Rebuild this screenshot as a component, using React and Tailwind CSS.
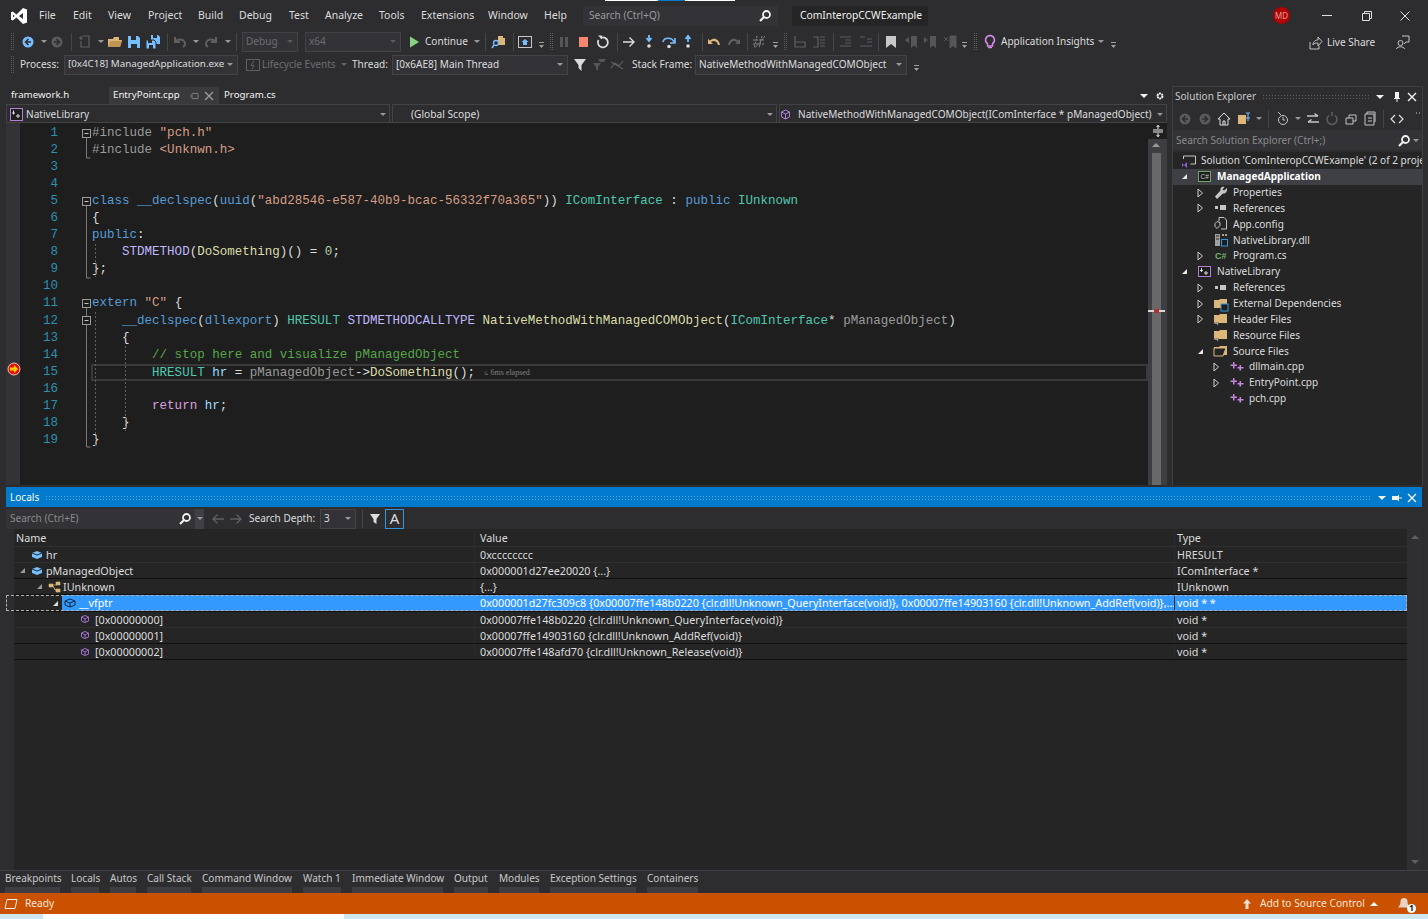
import React from "react";

const kw = "text-[#569cd6]";
const str = "text-[#d69d85]";
const typ = "text-[#4ec9b0]";
const mac = "text-[#beb7ff]";
const fn = "text-[#dcdcaa]";
const par = "text-[#9a9a9a]";
const loc = "text-[#9cdcfe]";
const num = "text-[#b5cea8]";
const com = "text-[#57a64a]";
const ctl = "text-[#d8a0df]";
const pre = "text-[#9b9b9b]";
const pl = "text-[#dcdcdc]";

const code = [
  [[pre, "#include "], [str, '"pch.h"']],
  [[pre, "#include "], [str, "<Unknwn.h>"]],
  [],
  [],
  [[kw, "class __declspec"], [pl, "("], [kw, "uuid"], [pl, "("], [str, '"abd28546-e587-40b9-bcac-56332f70a365"'], [pl, ")) "], [typ, "IComInterface"], [pl, " : "], [kw, "public "], [typ, "IUnknown"]],
  [[pl, "{"]],
  [[kw, "public"], [pl, ":"]],
  [[mac, "    STDMETHOD"], [pl, "("], [fn, "DoSomething"], [pl, ")() = "], [num, "0"], [pl, ";"]],
  [[pl, "};"]],
  [],
  [[kw, "extern "], [str, '"C"'], [pl, " {"]],
  [[kw, "    __declspec"], [pl, "("], [kw, "dllexport"], [pl, ") "], [typ, "HRESULT "], [mac, "STDMETHODCALLTYPE "], [fn, "NativeMethodWithManagedCOMObject"], [pl, "("], [typ, "IComInterface"], [pl, "* "], [par, "pManagedObject"], [pl, ")"]],
  [[pl, "    {"]],
  [[com, "        // stop here and visualize pManagedObject"]],
  [[typ, "        HRESULT "], [loc, "hr"], [pl, " = "], [par, "pManagedObject"], [pl, "->"], [fn, "DoSomething"], [pl, "();"]],
  [],
  [[ctl, "        return "], [loc, "hr"], [pl, ";"]],
  [[pl, "    }"]],
  [[pl, "}"]],
];

function Ic({ children, className = "", w = 16, h = 16 }) {
  return (
    <svg width={w} height={h} viewBox={`0 0 ${w} ${h}`} className={`shrink-0 ${className}`}>
      {children}
    </svg>
  );
}

function Caret({ className = "" }) {
  return <span className={`shrink-0 w-0 h-0 border-x-[3px] border-t-[3px] border-x-transparent border-t-[#999999] ${className}`} />;
}

function Sep({ className = "" }) {
  return <span className={`shrink-0 w-px h-[18px] bg-[#46464a] ${className}`} />;
}

function Grip({ className = "" }) {
  return <span className={`shrink-0 w-[3px] h-[17px] border-x border-dotted border-[#5a5a5d] ${className}`} />;
}

function Over({ className = "" }) {
  return (
    <Ic w={5} h={8} className={`mt-[6px] ${className}`}>
      <path d="M0 1h5v1H0zM0 4h5L2.5 7z" fill="#a0a0a0" />
    </Ic>
  );
}

function Combo({ text, className = "", dim }) {
  return (
    <div className={`shrink-0 flex items-center justify-between h-[20px] pl-[3px] pr-[4px] border border-[#434346] bg-[#333337] ${dim ? "text-[#6d6d70]" : "text-[#dcdcdc]"} ${className}`}>
      <span className="whitespace-nowrap">{text}</span>
      <Caret className={dim ? "opacity-40" : ""} />
    </div>
  );
}

const Back = ({ on }) => (
  <Ic>
    <circle cx="8" cy="8" r="5.5" fill={on ? "#75beff" : "#5a5a5d"} />
    <path d="M8.5 5L5.5 8l3 3M6 8h5" stroke="#2d2d30" strokeWidth="1.5" fill="none" />
  </Ic>
);

const Fwd = () => (
  <Ic>
    <circle cx="8" cy="8" r="5.5" fill="#5a5a5d" />
    <path d="M7.5 5l3 3-3 3M10 8H5" stroke="#2d2d30" strokeWidth="1.5" fill="none" />
  </Ic>
);

const Folder = () => (
  <Ic>
    <path d="M1 5h5l1-2h5v3h3l-2 7H1z" fill="#dcb67a" />
    <path d="M3 7h12l-2 6H1z" fill="#c09553" />
  </Ic>
);

const Save = () => (
  <Ic>
    <path d="M2 2h10l2 2v10H2z" fill="#75beff" />
    <path d="M5 2h5v4H5zM5 10h6v4H5z" fill="#2d2d30" />
  </Ic>
);

const SaveAll = () => (
  <Ic>
    <path d="M6 1h7l2 2v7h-9z" fill="#75beff" />
    <path d="M1 6h8l2 2v7H1z" fill="#75beff" stroke="#2d2d30" />
    <path d="M3 6h4v3H3zM4 11h4v4H4zM8 1h4v3H8z" fill="#2d2d30" />
  </Ic>
);

const Undo = ({ c = "#5f5f62" }) => (
  <Ic>
    <path d="M3 3v5h5M3 8c2-3 8-4 10 1 .5 2-.5 3-2 4" stroke={c} strokeWidth="2" fill="none" />
  </Ic>
);

const UndoWide = ({ c, flip }) => (
  <Ic className={flip ? "-scale-x-100" : ""}>
    <path d="M2 5v5h5L5 8c3-2 6-1 7 3h2c-1-6-6-8-10-4.500z" fill={c} />
  </Ic>
);

const Dim = ({ d }) => (
  <Ic>
    <path d={d} stroke="#5f5f62" strokeWidth="1.200" fill="none" />
  </Ic>
);

const Pin = ({ c = "#f1f1f1" }) => (
  <Ic w={10} h={12}>
    <path d="M3 1h4v6h1v1H5.500v3h-1V8H2V7h1z" fill={c} />
  </Ic>
);

const Close = ({ c = "#f1f1f1" }) => (
  <Ic w={10} h={10}>
    <path d="M1 1l8 8M9 1L1 9" stroke={c} strokeWidth="1.400" />
  </Ic>
);

const Lens = () => (
  <Ic w={14} h={14}>
    <circle cx="8.500" cy="5.500" r="3.500" stroke="#f1f1f1" strokeWidth="1.800" fill="none" />
    <path d="M6 8l-4 4" stroke="#f1f1f1" strokeWidth="2.200" />
  </Ic>
);

const DropWhite = ({ className = "" }) => (
  <span className={`shrink-0 w-0 h-0 border-x-[4px] border-t-[4px] border-x-transparent border-t-[#f1f1f1] ${className}`} />
);

const ArrowOpen = ({ c = "#e6e6e6" }) => (
  <Ic w={7} h={7}>
    <path d="M6 1v5H1z" fill={c} />
  </Ic>
);

const ArrowClosed = () => (
  <Ic w={7} h={10}>
    <path d="M1 1l4.500 4L1 9z" stroke="#d0d0d0" fill="none" />
  </Ic>
);

const CppIcon = () => (
  <Ic w={14} h={10}>
    <path d="M3 0v2.500H.5V4H3v2.500h1.500V4H7V2.500H4.500V0zM9.500 3v2h-2v1.500h2v2H11v-2h2.500V5H11V3z" fill="#c586e0" />
  </Ic>
);

const FolderTree = ({ kind }) => (
  <Ic>
    <path d="M1 4h5l1-1h7v9H1z" fill="#dcb67a" />
    {kind === "ext" && <rect x="8" y="8" width="7" height="7" fill="#1e1e1e" stroke="#3794d8" />}
    {kind === "filter" && <path d="M0 12h6l-2 3v-2H2z" fill="#dcdcdc" stroke="#252526" strokeWidth=".5" />}
    {kind === "open" && <path d="M1 5h12l-3 8H1z" fill="#252526" stroke="#dcb67a" />}
  </Ic>
);

const RefIcon = () => (
  <Ic w={14} h={8}>
    <rect x="1" y="2" width="3" height="3" fill="#c5c5c5" />
    <rect x="6" y="1" width="6" height="5" fill="#c5c5c5" />
  </Ic>
);

const tree = [
  { lvl: 0, text: "Solution 'ComInteropCCWExample' (2 of 2 projects)", icon: "sln" },
  { lvl: 1, text: "ManagedApplication", icon: "cs", arrow: "open", bold: true },
  { lvl: 2, text: "Properties", icon: "wrench", arrow: "closed" },
  { lvl: 2, text: "References", icon: "ref", arrow: "closed" },
  { lvl: 2, text: "App.config", icon: "config" },
  { lvl: 2, text: "NativeLibrary.dll", icon: "dll" },
  { lvl: 2, text: "Program.cs", icon: "csfile", arrow: "closed" },
  { lvl: 1, text: "NativeLibrary", icon: "vcx", arrow: "open" },
  { lvl: 2, text: "References", icon: "ref", arrow: "closed" },
  { lvl: 2, text: "External Dependencies", icon: "ext", arrow: "closed" },
  { lvl: 2, text: "Header Files", icon: "filter", arrow: "closed" },
  { lvl: 2, text: "Resource Files", icon: "filter" },
  { lvl: 2, text: "Source Files", icon: "open", arrow: "open" },
  { lvl: 3, text: "dllmain.cpp", icon: "cpp", arrow: "closed" },
  { lvl: 3, text: "EntryPoint.cpp", icon: "cpp", arrow: "closed" },
  { lvl: 3, text: "pch.cpp", icon: "cpp" },
];

function TreeIcon({ kind }) {
  if (kind === "sln")
    return (
      <Ic>
        <path d="M2.500 3h12v8h-5M2.500 3v3" stroke="#c5c5c5" fill="none" />
        <path d="M1 10l2 2 3-3v6l-3-3-2 2z" fill="#8a5fd0" />
      </Ic>
    );
  if (kind === "cs")
    return (
      <Ic w={14} h={12}>
        <rect x=".5" y=".5" width="12" height="10" fill="#1e1e1e" stroke="#6fa56b" />
        <text x="2.500" y="8" fontSize="6.500" fill="#c5c5c5" fontFamily="Liberation Sans">C#</text>
      </Ic>
    );
  if (kind === "vcx")
    return (
      <Ic w={14} h={12}>
        <rect x=".5" y=".5" width="12" height="10" fill="#1e1e1e" stroke="#b180d7" />
        <path d="M3 2v2H2v1h1v1h1V5h1V4H4V2zM7.500 5v1.500H6v1h1.500V9h1V7.500H10v-1H8.500V5z" fill="#dcdcdc" />
      </Ic>
    );
  if (kind === "wrench")
    return (
      <Ic>
        <path d="M14 3l-3 2.500-1.500-1L11.500 2C9 1 7 2.500 7.500 5.500L2 11.500 4 14l6-5.500c3 .5 4.500-2.500 4-5.500z" fill="#c5c5c5" />
      </Ic>
    );
  if (kind === "ref") return <RefIcon />;
  if (kind === "config")
    return (
      <Ic>
        <path d="M6 1.500h5l2.500 2.500v9H8M6 1.500V5" stroke="#c5c5c5" fill="none" />
        <path d="M2 7.500l2-2 3 1v3l-3 3-2-2z" stroke="#c5c5c5" fill="none" />
      </Ic>
    );
  if (kind === "dll")
    return (
      <Ic>
        <path d="M2 2h5v12H2zM9 2h2v2H9zM12 2h2v2h-2z" fill="#a0a0a0" />
        <rect x="8.500" y="7.500" width="6" height="6.500" fill="#1e1e1e" stroke="#3794d8" />
        <path d="M3 4h3M3 7h3" stroke="#252526" />
      </Ic>
    );
  if (kind === "csfile")
    return (
      <Ic>
        <text x="2" y="11" fontSize="9" fontWeight="700" fill="#6fb36a" fontFamily="Liberation Sans">C#</text>
      </Ic>
    );
  if (kind === "cpp") return <CppIcon />;
  return <FolderTree kind={kind} />;
}

function TreeRow({ row }) {
  const indent = ["-ml-[8px]", "pl-[8px]", "pl-[24px]", "pl-[40px]"][row.lvl];
  return (
    <div className={`flex items-center h-[15.85px] whitespace-nowrap ${indent} ${row.bold ? "bg-[#3f3f46]" : ""}`}>
      <span className="w-[7px] flex justify-center shrink-0">
        {row.arrow === "open" && <ArrowOpen />}
        {row.arrow === "closed" && <ArrowClosed />}
      </span>
      <span className="w-[11px] shrink-0" />
      <span className="w-[18px] -ml-[3px] mr-[3px] flex justify-center shrink-0">
        <TreeIcon kind={row.icon} />
      </span>
      <span className={row.bold ? "font-bold text-white" : "text-[#dcdcdc]"}>{row.text}</span>
    </div>
  );
}

const locals = [
  { pad: "pl-[5px]", name: "hr", value: "0xcccccccc", type: "HRESULT", icon: "var", line: "border-[#2f2f31]" },
  { pad: "pl-[5px]", name: "pManagedObject", value: "0x000001d27ee20020 {...}", type: "IComInterface *", icon: "var", open: true, line: "border-[#111111]" },
  { pad: "pl-[22px]", name: "IUnknown", value: "{...}", type: "IUnknown", icon: "base", open: true, line: "border-[#111111]" },
  { pad: "pl-[38px]", name: "__vfptr", value: "0x000001d27fc309c8 {0x00007ffe148b0220 {clr.dll!Unknown_QueryInterface(void)}, 0x00007ffe14903160 {clr.dll!Unknown_AddRef(void)},...", type: "void * *", icon: "sel", open: true, sel: true, line: "border-[#111111]" },
  { pad: "pl-[54px]", name: "[0x00000000]", value: "0x00007ffe148b0220 {clr.dll!Unknown_QueryInterface(void)}", type: "void *", icon: "elem", line: "border-[#2f2f31]" },
  { pad: "pl-[54px]", name: "[0x00000001]", value: "0x00007ffe14903160 {clr.dll!Unknown_AddRef(void)}", type: "void *", icon: "elem", line: "border-[#111111]" },
  { pad: "pl-[54px]", name: "[0x00000002]", value: "0x00007ffe148afd70 {clr.dll!Unknown_Release(void)}", type: "void *", icon: "elem", line: "border-[#111111]" },
];

function LocalIcon({ kind }) {
  if (kind === "var")
    return (
      <Ic w={12} h={10}>
        <path d="M1 3l5-2 5 2v4L6 9 1 7z" fill="#75beff" />
        <path d="M1 3l5 2 5-2" stroke="#252526" fill="none" />
      </Ic>
    );
  if (kind === "sel")
    return (
      <Ic w={12} h={10}>
        <path d="M1 3l5-2 5 2v4L6 9 1 7zM1 3l5 2 5-2M6 5v4" stroke="#10283f" fill="#3399ff" />
      </Ic>
    );
  if (kind === "base")
    return (
      <Ic w={14} h={12}>
        <path d="M1 3h4v3H1zM8 1h4v3H8zM8 8h4v3H8zM5 4h3M5 5l2 4h1" fill="#dcb67a" stroke="#dcb67a" strokeWidth=".6" />
      </Ic>
    );
  return (
    <Ic w={12} h={10}>
      <path d="M1.500 3L5 1.500 8.500 3v4L5 8.500 1.500 7zM1.500 3L5 5l3.500-2M5 5v3" stroke="#9b6fc9" fill="none" />
    </Ic>
  );
}

function LocalRow({ row }) {
  return (
    <div className={`relative flex h-[16.17px] border-b ${row.line}`}>
      <div className={`w-[460px] shrink-0 flex items-center ${row.pad}`}>
        <span className="w-[10px] shrink-0">{row.open && <ArrowOpen c={row.sel ? "#dcdcdc" : "#9a9a9a"} />}</span>
        <div className={`flex-1 h-full flex items-center pl-[2px] ${row.sel ? "bg-[#3399ff]" : ""}`}>
          <span className="w-[15px] shrink-0">
            <LocalIcon kind={row.icon} />
          </span>
          <span className={`pt-px ${row.sel ? "text-white" : "text-[#dcdcdc]"}`}>{row.name}</span>
        </div>
      </div>
      <div className={`w-[700px] shrink-0 pl-[5px] pt-px border-l flex items-center whitespace-nowrap overflow-hidden ${row.sel ? "bg-[#3399ff] border-[#3399ff] text-white" : "border-[#2b2b2d] text-[#dcdcdc]"}`}>
        {row.value}
      </div>
      <div className={`flex-1 pl-[2px] pt-px border-l border-[#2b2b2d] flex items-center ${row.sel ? "bg-[#3399ff] text-white" : "text-[#dcdcdc]"}`}>{row.type}</div>
      {row.sel && <div className="absolute inset-y-0 -left-[8px] right-0 border border-dashed border-[#b0b0b0] pointer-events-none" />}
    </div>
  );
}

const dots = "bg-[radial-gradient(#5f5f62_0.7px,transparent_0.9px)] bg-[length:3px_3px]";
const blueDots = "bg-[radial-gradient(#52a8e0_0.7px,transparent_0.9px)] bg-[length:3px_3px]";

function TopBars() {
  return (
    <>
      <div className="flex h-px pl-[605px]">
        <span className="w-[53px] bg-white" />
        <span className="w-[27px] bg-[#007acc]" />
        <span className="w-[50px] bg-white" />
      </div>
      <div className="flex items-center h-[29px] shrink-0">
        <Ic w={18} h={18} className="ml-[10px]">
          <path fillRule="evenodd" d="M13 1L6.500 7.500 2.800 4.500 1 5.300v7.400l1.800.8 3.700-3L13 17l4-1.600V2.600zM13 6v6L9 9zM3 7.500L4.500 9 3 10.500z" fill="#ffffff" />
        </Ic>
        <div className="flex ml-[11px] text-[#dcdcdc] text-[10.5px]">
          <span className="w-[34px]">File</span>
          <span className="w-[35px]">Edit</span>
          <span className="w-[40px]">View</span>
          <span className="w-[50px]">Project</span>
          <span className="w-[41px]">Build</span>
          <span className="w-[50px]">Debug</span>
          <span className="w-[36px]">Test</span>
          <span className="w-[54px]">Analyze</span>
          <span className="w-[42px]">Tools</span>
          <span className="w-[67px]">Extensions</span>
          <span className="w-[56px]">Window</span>
          <span className="w-[39px]">Help</span>
        </div>
        <div className="flex items-center justify-between w-[195px] h-[20px] pl-[6px] pr-[6px] bg-[#333337] text-[#9a9a9a]">
          <span>Search (Ctrl+Q)</span>
          <Lens />
        </div>
        <div className="flex items-center justify-center w-[136px] h-[20px] ml-[14px] pl-[2px] bg-[#252526] text-[#f1f1f1] text-[10.3px]">ComInteropCCWExample</div>
        <span className="flex items-center justify-center w-[17px] h-[17px] ml-[345px] rounded-full bg-[#b00000] text-[#e0a0a0] text-[8px]">MD</span>
        <span className="w-[10px] h-px ml-[32px] bg-[#e0e0e0]" />
        <Ic w={12} h={12} className="ml-[29px]">
          <path d="M1.500 3.500h7v7h-7zM3.500 3.500v-2h7v7h-2" stroke="#e0e0e0" fill="none" />
        </Ic>
        <Ic w={12} h={12} className="ml-[26px]">
          <path d="M1.500 1.500l9 9M10.500 1.500l-9 9" stroke="#e0e0e0" />
        </Ic>
      </div>
    </>
  );
}

function ToolbarOne() {
  return (
    <div className="flex items-center h-[22px] shrink-0 pl-[11px] pt-px">
      <Grip />
      <span className="ml-[6px]"><Back on /></span>
      <Caret className="ml-[5px]" />
      <span className="ml-[2px]"><Fwd /></span>
      <Sep className="ml-[6px]" />
      <span className="ml-[5px]"><Dim d="M6 2h6v11H4V7M2 4h4M4 2v4" /></span>
      <Caret className="ml-[5px]" />
      <span className="ml-[3px]"><Folder /></span>
      <span className="ml-[3px]"><Save /></span>
      <span className="ml-[3px]"><SaveAll /></span>
      <Sep className="ml-[6px]" />
      <span className="ml-[4px]"><Undo /></span>
      <Caret className="ml-[5px]" />
      <span className="ml-[4px] -scale-x-100"><Undo /></span>
      <Caret className="ml-[6px]" />
      <Sep className="ml-[5px]" />
      <Combo dim text="Debug" className="ml-[5px] w-[56px]" />
      <Combo dim text="x64" className="ml-[7px] w-[96px]" />
      <Ic className="ml-[5px]"><path d="M4 2.500v11L13 8z" fill="#89d185" /></Ic>
      <span className="ml-[3px] w-[44px] text-[#dcdcdc]">Continue</span>
      <Caret className="ml-[5px]" />
      <Sep className="ml-[5px]" />
      <span className="ml-[5px]">
        <Ic>
          <path d="M7 2h5v2h2v7H7z" fill="#dcb67a" />
          <circle cx="5" cy="9" r="2.500" stroke="#75beff" strokeWidth="1.300" fill="#2d2d30" />
          <path d="M3 11l-2 3" stroke="#75beff" strokeWidth="1.500" />
        </Ic>
      </span>
      <Sep className="ml-[6px]" />
      <span className="ml-[3px]">
        <Ic>
          <rect x="1.500" y="2.500" width="13" height="11" stroke="#c5c5c5" fill="none" />
          <path d="M8 5L4.500 8H6v3h4V8h1.500z" fill="#75beff" />
        </Ic>
      </span>
      <Over className="ml-[6px]" />
      <Grip className="ml-[6px]" />
      <span className="ml-[3px]"><Ic><path d="M4 3h3v10H4zM9 3h3v10H9z" fill="#56565a" /></Ic></span>
      <span className="ml-[4px]"><Ic><rect x="3" y="3" width="9" height="10" fill="#f48771" /></Ic></span>
      <span className="ml-[3px]"><Ic><path d="M5.500 4a5 5 0 1 1-2 2" stroke="#dcdcdc" strokeWidth="1.800" fill="none" /><path d="M3 1.500h4v4z" fill="#dcdcdc" /></Ic></span>
      <Sep className="ml-[6px]" />
      <span className="ml-[3px]"><Ic><path d="M2 8h11M8.500 3.500L13 8l-4.500 4.500" stroke="#dcdcdc" strokeWidth="1.400" fill="none" /></Ic></span>
      <span className="ml-[4px]"><Ic><path d="M8 1v5M5.500 4L8 7l2.500-3" stroke="#75beff" strokeWidth="1.800" fill="none" /><circle cx="8" cy="12" r="1.800" fill="#dcdcdc" /></Ic></span>
      <span className="ml-[4px]"><Ic><path d="M2 8c1-5 9-5 11 0M14 4v5h-5" stroke="#75beff" strokeWidth="1.600" fill="none" /><circle cx="8" cy="12.500" r="1.800" fill="#dcdcdc" /></Ic></span>
      <span className="ml-[3px]"><Ic><path d="M8 8V2M5.500 5L8 2l2.500 3" stroke="#75beff" strokeWidth="1.800" fill="none" /><circle cx="8" cy="12" r="1.800" fill="#dcdcdc" /></Ic></span>
      <Sep className="ml-[6px]" />
      <span className="ml-[3px]"><UndoWide c="#dcb67a" /></span>
      <span className="ml-[4px]"><UndoWide c="#5f5f62" flip /></span>
      <Sep className="ml-[5px]" />
      <span className="ml-[4px]"><Ic><path d="M5 2L2 14M10 2L7 14M1 6h12M1 10h12M13 2l-10 12" stroke="#8a8a8a" strokeDasharray="2 1" fill="none" /></Ic></span>
      <Over className="ml-[5px]" />
      <Grip className="ml-[6px]" />
      <span className="ml-[5px]"><Dim d="M3 2v6h10v5H3V8" /></span>
      <span className="ml-[3px]"><Dim d="M2 3h5v10H2M9 3h5M9 6h5M9 9h5M9 12h5" /></span>
      <Sep className="ml-[6px]" />
      <span className="ml-[4px]"><Dim d="M2 3h11M7 6h6M7 9h6M2 12h11" /></span>
      <span className="ml-[4px]"><Dim d="M2 3h5M9 5h5M9 8h5M2 12h12" /></span>
      <Sep className="ml-[4px]" />
      <span className="ml-[4px]"><Ic><path d="M3 2h10v12l-5-4-5 4z" fill="#c8c8c8" /></Ic></span>
      <span className="ml-[4px]"><Ic><path d="M8 2h6v12l-3-2.500L8 14zM2 6l4-3v6z" fill="#56565a" /></Ic></span>
      <span className="ml-[3px]"><Ic><path d="M8 2h6v12l-3-2.500L8 14zM6 6L2 3v6z" fill="#56565a" /></Ic></span>
      <span className="ml-[4px]"><Ic><path d="M8 2h6v12l-3-2.500L8 14zM2 3l4 4M6 3L2 7" fill="#56565a" stroke="#56565a" /></Ic></span>
      <Over className="ml-[4px]" />
      <Grip className="ml-[7px]" />
      <span className="ml-[5px]">
        <Ic>
          <path d="M8 1.500a4.500 4.500 0 0 0-2.500 8.200V12h5V9.700A4.500 4.500 0 0 0 8 1.500z" stroke="#d18ae6" strokeWidth="1.500" fill="#2d2d30" />
          <path d="M6 13.500h4" stroke="#d18ae6" strokeWidth="1.500" />
        </Ic>
      </span>
      <span className="ml-[3px] w-[93px] whitespace-nowrap text-[#dcdcdc]">Application Insights</span>
      <Caret className="ml-[4px]" />
      <Over className="ml-[7px]" />
      <span className="ml-auto mt-[3px]">
        <Ic>
          <path d="M3 7v7h9v-3M6 10c0-4 3-5 5-5V2l4 4.500-4 4.500V8c-2 0-4 0-5 2z" stroke="#c5c5c5" fill="none" />
        </Ic>
      </span>
      <span className="ml-[4px] mt-[3px] w-[48px] whitespace-nowrap text-[#dcdcdc]">Live Share</span>
      <span className="ml-[20px] mr-[17px]">
        <Ic>
          <path d="M7 2h7v6h-3l-2 2M5.500 6.500a2.500 2.500 0 1 1 0 5 2.500 2.500 0 0 1 0-5zM1.500 15c.5-3 7.500-3 8 0" stroke="#c5c5c5" fill="none" />
        </Ic>
      </span>
    </div>
  );
}

function ToolbarTwo() {
  return (
    <div className="flex items-center h-[24px] shrink-0 pl-[11px] pt-px">
      <Grip />
      <span className="ml-[6px] w-[38px] text-[#dcdcdc]">Process:</span>
      <Combo text="[0x4C18] ManagedApplication.exe" className="ml-[6px] w-[174px] text-[9.8px]" />
      <span className="ml-[7px]">
        <Ic>
          <rect x="1.500" y="2.500" width="13" height="11" stroke="#5f5f62" fill="none" />
          <path d="M9 4L6 8.500h3L7 12" stroke="#5f5f62" fill="none" />
        </Ic>
      </span>
      <span className="ml-[1px] w-[74px] whitespace-nowrap text-[#6d6d70]">Lifecycle Events</span>
      <Caret className="ml-[5px] opacity-50" />
      <span className="ml-[5px] w-[35px] text-[#dcdcdc]">Thread:</span>
      <Combo text="[0x6AE8] Main Thread" className="ml-[5px] w-[176px]" />
      <span className="ml-[4px]"><Ic><path d="M2 2h12L9.500 8v6l-3-3V8z" fill="#dcdcdc" /></Ic></span>
      <span className="ml-[3px]"><Ic><path d="M2 6h8L7 10v4L5 12v-2zM7 2h8l-2 3H9z" fill="#56565a" /></Ic></span>
      <span className="ml-[2px]"><Dim d="M2 11l4-5 4 3 4-5M2 5l12 7" /></span>
      <span className="ml-[7px] w-[59px] whitespace-nowrap text-[#dcdcdc]">Stack Frame:</span>
      <Combo text="NativeMethodWithManagedCOMObject" className="ml-[4px] w-[212px]" />
      <Over className="ml-[7px]" />
    </div>
  );
}

function Outline() {
  const box = (y) => (
    <g key={y}>
      <rect x="0.500" y={y - 3.500} width="8" height="8" fill="#1e1e1e" stroke="#9a9a9a" />
      <path d={`M2.500 ${y + 0.500}h4`} stroke="#c0c0c0" />
    </g>
  );
  return (
    <Ic w={10} h={326} className="ml-[24px]">
      <path d="M4.500 13v20h4M4.500 81v72h4M4.500 183v139h4" stroke="#7a7a7a" fill="none" />
      {[8, 76, 178, 195].map(box)}
    </Ic>
  );
}

function Editor() {
  return (
    <div className="flex h-[362px] bg-[#1e1e1e]">
      <div className="relative w-[14px] shrink-0 bg-[#333337]">
        <Ic w={14} h={14} className="absolute top-[239px] left-px">
          <circle cx="7" cy="7" r="6" fill="#e51400" stroke="#f0c0c0" />
          <path d="M3 5.500h4V3l4 4-4 4V8.500H3z" fill="#ffcc00" />
        </Ic>
      </div>
      <div className="w-[38px] shrink-0 pt-[2px] font-[Liberation_Mono] text-[12.52px] text-right text-[#2b91af]">
        {code.map((_, i) => (
          <div key={i} className="h-[17.06px] leading-[17px]">{i + 1}</div>
        ))}
      </div>
      <div className="pt-[2px] w-[34px] shrink-0"><Outline /></div>
      <div className="relative flex-1 pt-[2px] font-[Liberation_Mono] text-[12.52px] whitespace-pre">
        {code.map((toks, i) => (
          <div key={i} className="relative h-[17.06px] leading-[17px]">
            {toks.map(([c, t], j) => (
              <span key={j} className={c}>{t}</span>
            ))}
            {i === 14 && (
              <>
                <span className="ml-[9px] align-[1px] font-[Liberation_Serif] text-[8px] text-[#808080]">≤ 6ms elapsed</span>
                <div className="absolute inset-y-0 -left-px right-0 border-2 border-[#3a3a3a]" />
              </>
            )}
          </div>
        ))}
        <Ic w={40} h={326} className="absolute top-[2px] left-0">
          <path d="M3.500 119v33M3.500 187v136M33.500 221v85" stroke="#5f5f62" strokeDasharray="2 2" fill="none" />
        </Ic>
      </div>
      <div className="relative w-[19px] shrink-0 flex flex-col bg-[#3e3e42]">
        <div className="flex items-center justify-center h-[16px] bg-[#1e1e1e]">
          <Ic w={12} h={12}>
            <path d="M1 5h10M1 7h10M6 0v4M4.500 2L6 .500 7.500 2M6 8v4M4.500 10L6 11.500 7.500 10" stroke="#f1f1f1" fill="none" />
          </Ic>
        </div>
        <div className="flex justify-center pt-[4px] pr-[3px] h-[14px]">
          <span className="w-0 h-0 border-x-[4px] border-b-[4px] border-x-transparent border-b-[#999999]" />
        </div>
        <div className="flex-1 ml-[4px] mr-[6px] bg-[#686868]" />
        <div className="absolute top-[187px] left-0 w-[17px] h-[2px] bg-[#d8d8d8]" />
        <div className="absolute top-[186px] left-[6px] w-[5px] h-[4px] bg-[#a83232]" />
      </div>
    </div>
  );
}

function EditorPane() {
  return (
    <div className="w-[1161px] shrink-0">
      <div className="flex items-center h-[18px] pt-px text-[#f1f1f1] text-[9.7px]">
        <span className="w-[103px] pl-[5px]">framework.h</span>
        <div className="flex items-center w-[110px] h-full pl-[4px] bg-[#3a3a3d]">
          <span className="w-[71px]">EntryPoint.cpp</span>
          <span className="ml-[5px]"><Ic w={10} h={10}><path d="M1 5h2M3 2.500v5h6v-5z" stroke="#77777a" fill="none" /></Ic></span>
          <span className="ml-[5px]"><Close c="#9a9a9a" /></span>
        </div>
        <span className="ml-[5px]">Program.cs</span>
        <DropWhite className="ml-auto" />
        <span className="ml-[7px] mr-[2px]">
          <Ic w={10} h={10}><circle cx="5" cy="5" r="2.500" stroke="#f1f1f1" strokeWidth="2" fill="none" strokeDasharray="2 .6" /></Ic>
        </span>
      </div>
      <div className="flex items-stretch h-[19px] gap-[2px] border-b border-[#434346]">
        <div className="flex shrink-0 items-center justify-between w-[384px] pt-[2px] pl-[3px] pr-[3px] bg-[#2d2d30] border border-[#434346] border-b-0 text-[#dcdcdc]">
          <span className="flex items-center gap-[3px]">
            <Ic w={13} h={13}>
              <rect x=".5" y=".5" width="12" height="12" fill="#1e1e1e" stroke="#b180d7" />
              <path d="M3 2.500v2H2v1h1v1h1v-1h1v-1H4v-2zM7.500 6v1.500H6v1h1.500V10h1V8.500H10v-1H8.500V6z" fill="#dcdcdc" />
            </Ic>
            NativeLibrary
          </span>
          <Caret />
        </div>
        <div className="flex shrink-0 items-center justify-between w-[385px] pt-[2px] pl-[18px] pr-[3px] bg-[#2d2d30] border border-[#434346] border-b-0 text-[#dcdcdc] text-[10.2px]">
          <span>(Global Scope)</span>
          <Caret />
        </div>
        <div className="flex items-center justify-between flex-1 pt-[2px] pr-[3px] bg-[#2d2d30] border border-[#434346] border-b-0 text-[#dcdcdc] whitespace-nowrap">
          <span className="flex items-center gap-[7px]">
            <Ic w={11} h={11}><path d="M1.500 3L5.500 1l4 2v5l-4 2-4-2zM1.500 3l4 2 4-2M5.500 5v5" stroke="#b180d7" fill="none" /></Ic>
            NativeMethodWithManagedCOMObject(IComInterface * pManagedObject)
          </span>
          <Caret />
        </div>
      </div>
      <Editor />
    </div>
  );
}

function SolutionExplorer() {
  return (
    <div className="flex flex-col w-[251px] ml-[5px] h-[399px] border-x border-t border-[#3f3f46] bg-[#252526]">
      <div className="flex items-center h-[20px] pl-[2px] pr-[5px] bg-[#2d2d30] text-[#c8c8c8]">
        <span className="whitespace-nowrap">Solution Explorer</span>
        <span className={`flex-1 h-[6px] mx-[6px] ${dots}`} />
        <DropWhite />
        <span className="ml-[8px]"><Pin /></span>
        <span className="ml-[5px]"><Close /></span>
      </div>
      <div className="flex items-center h-[23px] pl-[4px] bg-[#2d2d30]">
        <Back />
        <span className="ml-[4px]"><Fwd /></span>
        <span className="ml-[3px]">
          <Ic><path d="M8 2L2 8h2v6h8V8h2zM7 14v-4h2v4" stroke="#dcdcdc" fill="none" /></Ic>
        </span>
        <span className="ml-[4px]">
          <Ic>
            <path d="M2 4h8v9H2z" fill="#dcb67a" />
            <path d="M10 2h4M12 2v8M10 7h4" stroke="#75beff" />
          </Ic>
        </span>
        <Caret className="ml-[4px]" />
        <Sep className="ml-[6px]" />
        <span className="ml-[6px]">
          <Ic><circle cx="8" cy="9" r="4.500" stroke="#c5c5c5" fill="none" /><path d="M8 6v3h2M3 1l3 3" stroke="#c5c5c5" fill="none" /></Ic>
        </span>
        <Caret className="ml-[4px]" />
        <span className="ml-[4px]">
          <Ic><path d="M2 5h11M9.500 2.500L13 5M14 11H3M6.500 8.500L3 11" stroke="#c5c5c5" strokeWidth="1.500" fill="none" /></Ic>
        </span>
        <span className="ml-[3px]">
          <Ic><path d="M5 4.500a5 5 0 1 0 6 0M8 1v4" stroke="#5f5f62" strokeWidth="1.500" fill="none" /></Ic>
        </span>
        <span className="ml-[3px]">
          <Ic><path d="M3 7h7v6H3zM6 7V4h7v6h-3" stroke="#c5c5c5" fill="none" /></Ic>
        </span>
        <span className="ml-[3px]">
          <Ic><path d="M3 3h9v11H3zM5 3V1h8v10M6 7h4M6 10h4" stroke="#c5c5c5" fill="none" /></Ic>
        </span>
        <Sep className="ml-[5px]" />
        <span className="ml-[5px]">
          <Ic><path d="M6 4L2 8l4 4M10 4l4 4-4 4" stroke="#dcdcdc" fill="none" strokeWidth="1.200" /></Ic>
        </span>
        <span className="ml-[10px] mb-[12px]">
          <Ic w={6} h={4}><path d="M1 1l1 1-1 1M4 1l1 1-1 1" stroke="#a0a0a0" strokeWidth=".7" fill="none" /></Ic>
        </span>
      </div>
      <div className="flex items-center h-[22px] pb-[2px] bg-[#2d2d30]">
        <div className="flex items-center justify-between flex-1 h-[20px] pt-px pl-[3px] pr-[3px] bg-[#333337] text-[#8a8a8a]">
          <span>Search Solution Explorer (Ctrl+;)</span>
          <span className="flex items-center gap-[2px]"><Lens /><Caret /></span>
        </div>
      </div>
      <div className="flex-1 pt-px overflow-hidden">
        {tree.map((r) => (
          <TreeRow key={r.text + r.lvl + r.icon} row={r} />
        ))}
      </div>
    </div>
  );
}

function LocalsPane() {
  return (
    <div className="flex flex-col h-[383px] mx-[6px] mr-[6px]">
      <div className="flex items-center h-[20px] pt-px pl-[4px] pr-[5px] bg-[#007acc] text-white">
        <span>Locals</span>
        <span className={`flex-1 h-[6px] mx-[6px] ${blueDots}`} />
        <DropWhite />
        <span className="ml-[6px] -rotate-90"><Pin /></span>
        <span className="ml-[5px]"><Close /></span>
      </div>
      <div className="flex items-center h-[22px] shrink-0 pt-px">
        <div className="flex items-center justify-between w-[198px] h-[20px] pl-[4px] bg-[#333337] text-[#8a8a8a]">
          <span>Search (Ctrl+E)</span>
          <span className="flex items-center h-full">
            <span className="mr-[3px]"><Lens /></span>
            <span className="flex items-center justify-center w-[9px] h-full bg-[#3f3f46]"><Caret /></span>
          </span>
        </div>
        <span className="ml-[7px]">
          <Ic w={14} h={14}><path d="M13 7H2M6.500 2.500L2 7l4.500 4.500" stroke="#5f5f62" strokeWidth="1.300" fill="none" /></Ic>
        </span>
        <span className="ml-[4px]">
          <Ic w={14} h={14}><path d="M1 7h11M7.500 2.500L12 7l-4.500 4.500" stroke="#5f5f62" strokeWidth="1.300" fill="none" /></Ic>
        </span>
        <span className="ml-[6px] w-[66px] text-[#dcdcdc] whitespace-nowrap">Search Depth:</span>
        <Combo text="3" className="w-[36px] ml-[5px]" />
        <Sep className="ml-[6px]" />
        <span className="ml-[5px]"><Ic w={14} h={14}><path d="M2 2h10L8.500 7v5l-3-2V7z" fill="#dcdcdc" /></Ic></span>
        <span className="ml-[3px] flex items-center justify-center w-[19px] h-[20px] border border-[#3794d8] text-[#dcdcdc] text-[15px]">A</span>
      </div>
      <div className="flex-1 flex min-h-0">
        <div className="w-[8px] shrink-0" />
        <div className="flex-1 bg-[#252526] text-[10.75px]">
          <div className="flex items-center h-[18px] pt-[2px] border-b border-[#2f2f31] text-[#dcdcdc]">
            <span className="w-[460px] pl-[2px]">Name</span>
            <span className="w-[700px] pl-[5px] border-l border-[#2b2b2d]">Value</span>
            <span className="flex-1 pl-[2px] border-l border-[#2b2b2d]">Type</span>
          </div>
          {locals.map((r) => (
            <LocalRow key={r.name} row={r} />
          ))}
        </div>
        <div className="flex flex-col items-center justify-between w-[15px] shrink-0 py-[6px] bg-[#2f2f31]">
          <span className="w-0 h-0 border-x-[4px] border-b-[4px] border-x-transparent border-b-[#5f5f62]" />
          <span className="w-0 h-0 border-x-[4px] border-t-[4px] border-x-transparent border-t-[#5f5f62]" />
        </div>
      </div>
    </div>
  );
}

const tabs = [
  ["Breakpoints", "w-[55px]"],
  ["Locals", "w-[28px]"],
  ["Autos", "w-[26px]"],
  ["Call Stack", "w-[44px]"],
  ["Command Window", "w-[90px]"],
  ["Watch 1", "w-[38px]"],
  ["Immediate Window", "w-[91px]"],
  ["Output", "w-[34px]"],
  ["Modules", "w-[40px]"],
  ["Exception Settings", "w-[86px]"],
  ["Containers", "w-[51px]"],
];

function BottomTabs() {
  return (
    <div className="flex gap-[11px] h-[23px] pl-[5px] border-t border-[#3f3f46] shrink-0 text-[10.05px]">
      {tabs.map(([t, w]) => (
        <div key={t} className={`flex flex-col justify-between shrink-0 ${w}`}>
          <span className="text-[#c8c8c8] whitespace-nowrap">{t}</span>
          <span className="h-[6px] bg-[#3e3e42]" />
        </div>
      ))}
    </div>
  );
}

function StatusBar() {
  return (
    <>
      <div className="flex items-center h-[21px] shrink-0 pl-[4px] bg-[#ca5100] text-[#f5e6dc] text-[10.2px]">
        <Ic w={14} h={12}>
          <path d="M3 1.500h10L11 10.500H1z" stroke="#f1f1f1" fill="none" />
        </Ic>
        <span className="ml-[7px]">Ready</span>
        <span className="ml-auto">
          <Ic w={10} h={12}><path d="M5 1L1 5.500h2.500V11h3V5.500H9z" fill="#f1dccf" /></Ic>
        </span>
        <span className="ml-[8px] w-[105px] whitespace-nowrap">Add to Source Control</span>
        <span className="ml-[5px] w-0 h-0 border-x-[4px] border-b-[4px] border-x-transparent border-b-white" />
        <span className="relative ml-[19px] mr-[17px]">
          <Ic w={14} h={14}>
            <path d="M7 1a3.500 3.500 0 0 0-3.500 3.500C3.500 8 2 9 1 10.500h12C12 9 10.500 8 10.500 4.500A3.500 3.500 0 0 0 7 1z" fill="#e8d5c8" />
          </Ic>
          <span className="absolute -right-[5px] -bottom-[2px] flex items-center justify-center w-[9px] h-[9px] rounded-full bg-white text-black text-[8px] font-bold">1</span>
        </span>
      </div>
      <div className="flex h-[5px] pl-[43px] bg-[#d0e6ef]">
        <span className="w-[301px] bg-white" />
      </div>
    </>
  );
}

export default function App() {
  return (
    <div className="flex flex-col h-[919px] overflow-hidden bg-[#2d2d30] font-[Noto_Sans,sans-serif] text-[10.05px]">
      <TopBars />
      <ToolbarOne />
      <ToolbarTwo />
      <div className="h-[10px] shrink-0" />
      <div className="flex h-[399px] shrink-0 pl-[6px]">
        <EditorPane />
        <SolutionExplorer />
      </div>
      <div className="h-[2px] shrink-0" />
      <LocalsPane />
      <BottomTabs />
      <StatusBar />
    </div>
  );
}
